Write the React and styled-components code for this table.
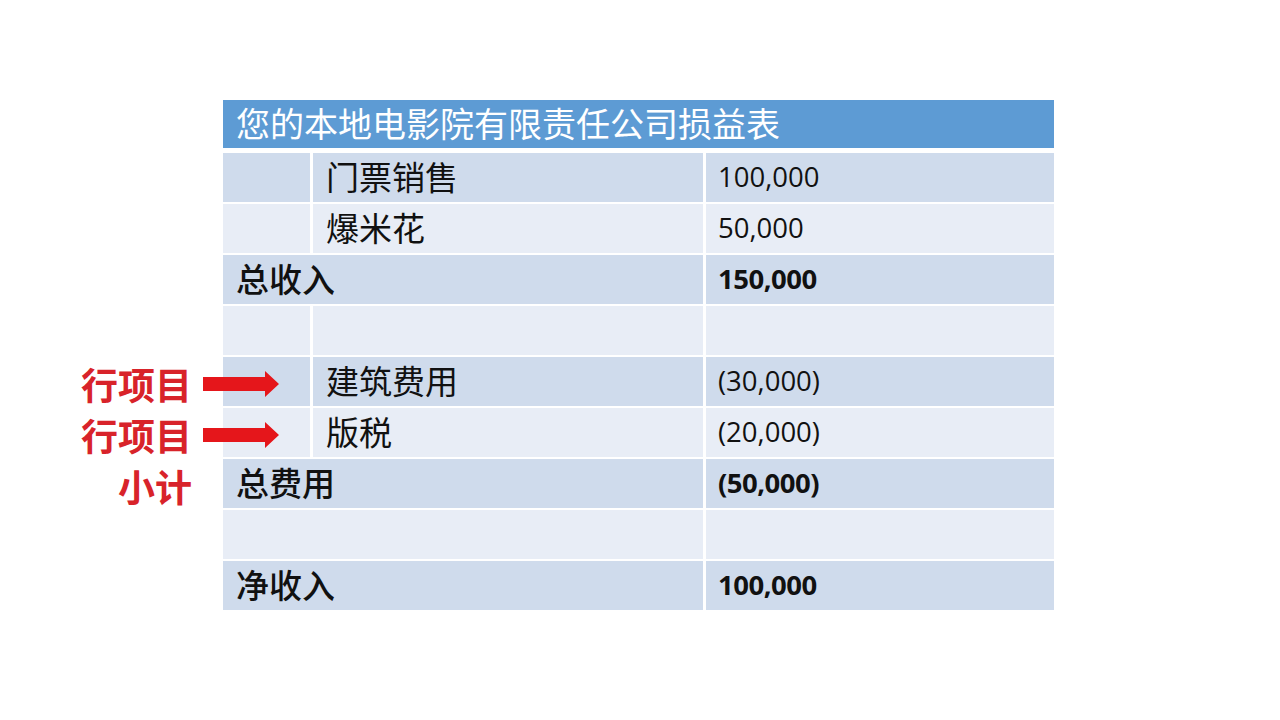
import React from "react";
import styled, { createGlobalStyle } from "styled-components";

const Global = createGlobalStyle`
  html, body { margin: 0; padding: 0; background: #ffffff; }
  body { font-family: "Open Sans", "Noto Sans CJK SC", sans-serif; }
`;

const Page = styled.div`
  width: 1280px;
  height: 720px;
  box-sizing: border-box;
  padding: 100px 0 0 223px;
  background: #ffffff;
  overflow: hidden;
`;

const Table = styled.div`
  width: 831px;
  display: flex;
  flex-direction: column;
`;

const Header = styled.div`
  height: 48px;
  margin-bottom: 5px;
  background: #5d9bd4;
  color: #ffffff;
  font-family: "Noto Sans CJK SC", sans-serif;
  font-size: 34px;
  line-height: 46px;
  padding-left: 13px;
  white-space: nowrap;
`;

const Body = styled.div`
  display: grid;
  grid-template-columns: 87px 390px 348px;
  grid-auto-rows: 49px;
  column-gap: 3px;
  row-gap: 2px;
`;

const Cell = styled.div`
  position: relative;
  display: flex;
  align-items: center;
  box-sizing: border-box;
  padding-left: ${(p) => (p.$num ? "12px" : "13px")};
  padding-bottom: ${(p) => (p.$num ? "2px" : "4px")};
  background: ${(p) => (p.$dark ? "#cfdbec" : "#e8edf6")};
  color: #111111;
  grid-column: ${(p) => (p.$span ? "span 2" : "auto")};
  font-family: ${(p) =>
    p.$num ? '"Open Sans", sans-serif' : '"Noto Sans CJK SC", sans-serif'};
  font-size: ${(p) => (p.$num ? "27.5px" : "33px")};
  font-weight: ${(p) => (p.$bold ? (p.$num ? 700 : 500) : 400)};
  letter-spacing: ${(p) => (p.$num && p.$bold ? "-0.5px" : "0")};
  white-space: nowrap;
`;

const Callout = styled.span`
  position: absolute;
  right: calc(100% + 31px);
  top: 50%;
  transform: translateY(-50%);
  margin-top: 2px;
  font-family: "Noto Sans CJK SC", sans-serif;
  font-size: 37px;
  font-weight: 700;
  color: #d8232a;
  white-space: nowrap;
  line-height: 1;
`;

const Arrow = styled.svg`
  position: absolute;
  left: -20px;
  top: 50%;
  transform: translateY(-50%);
  margin-top: 2px;
  width: 76px;
  height: 26px;
`;

const RedArrow = () => (
  <Arrow viewBox="0 0 76 26">
    <polygon
      points="0,6 62,6 62,0 76,13 62,26 62,20 0,20"
      fill="#e5161b"
    />
  </Arrow>
);

const rows = [
  { label: "门票销售", value: "100,000" },
  { label: "爆米花", value: "50,000" },
  { total: "总收入", value: "150,000", bold: true },
  { blank: true },
  { label: "建筑费用", value: "(30,000)", callout: "行项目" },
  { label: "版税", value: "(20,000)", callout: "行项目" },
  { total: "总费用", value: "(50,000)", bold: true, callout: "小计", noArrow: true },
  { blankSpan: true },
  { total: "净收入", value: "100,000", bold: true },
];

export default function App() {
  return (
    <>
      <Global />
      <Page>
        <Table>
          <Header>您的本地电影院有限责任公司损益表</Header>
          <Body>
            {rows.map((r, i) => {
              const dark = i % 2 === 0;
              const note = r.callout ? (
                <>
                  <Callout>{r.callout}</Callout>
                  {!r.noArrow && <RedArrow />}
                </>
              ) : null;
              if (r.total || r.blankSpan) {
                return (
                  <React.Fragment key={i}>
                    <Cell $dark={dark} $span $bold={r.bold}>
                      {note}
                      {r.total}
                    </Cell>
                    <Cell $dark={dark} $num $bold={r.bold}>
                      {r.value}
                    </Cell>
                  </React.Fragment>
                );
              }
              return (
                <React.Fragment key={i}>
                  <Cell $dark={dark}>{note}</Cell>
                  <Cell $dark={dark}>{r.label}</Cell>
                  <Cell $dark={dark} $num>
                    {r.value}
                  </Cell>
                </React.Fragment>
              );
            })}
          </Body>
        </Table>
      </Page>
    </>
  );
}
